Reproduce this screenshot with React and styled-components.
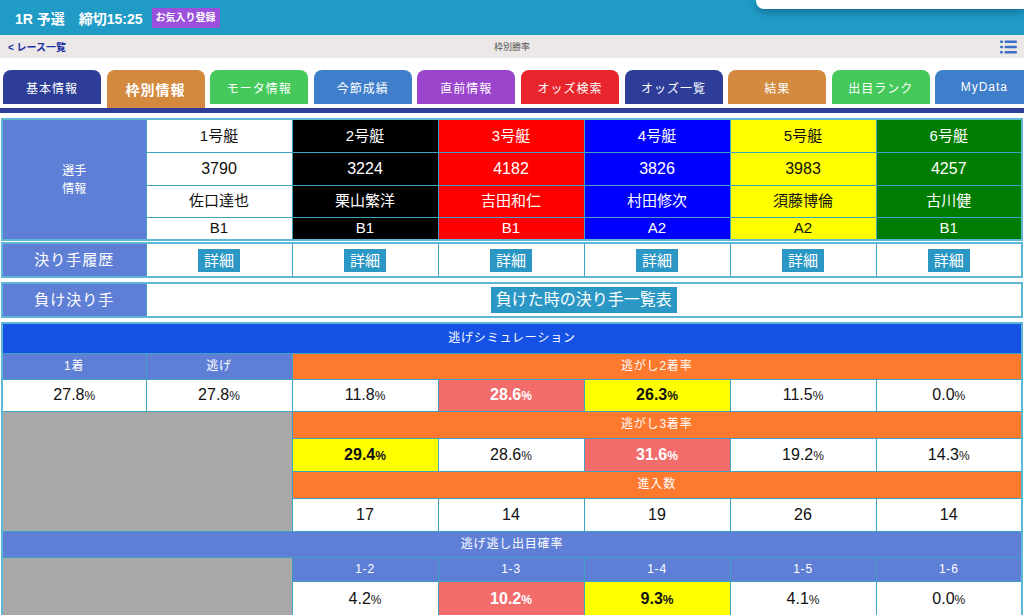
import React from 'react';
import styled, { createGlobalStyle } from 'styled-components';

const GlobalStyle = createGlobalStyle`
  html, body {
    margin: 0;
    padding: 0;
    background: #ffffff;
    font-family: "Liberation Sans", "Noto Sans CJK JP", sans-serif;
  }
  #root {
    width: 1024px;
    height: 615px;
    overflow: hidden;
  }
`;

const Page = styled.div`
  width: 1024px;
  height: 615px;
  overflow: hidden;
  position: relative;
`;

const Header = styled.header`
  height: 35px;
  background: #1f9bc6;
  display: flex;
  align-items: center;
  padding-left: 15px;
  gap: 9px;
  position: relative;
`;

const Title = styled.h1`
  margin: 0;
  color: #ffffff;
  font-size: 14px;
  font-weight: bold;
  white-space: pre;
`;

const Badge = styled.span`
  background: #9a50da;
  color: #ffffff;
  font-size: 10px;
  font-weight: bold;
  padding: 4px 4px;
  line-height: 12px;
`;

const FloatPanel = styled.div`
  position: absolute;
  top: 0;
  right: 0;
  width: 268px;
  height: 9px;
  background: #ffffff;
  border-bottom-left-radius: 8px;
  box-shadow: 0 3px 7px rgba(0, 40, 70, 0.4);
`;

const NavBar = styled.nav`
  height: 23px;
  background: #ebe8e7;
  display: grid;
  grid-template-columns: 1fr auto 1fr;
  align-items: center;
  padding: 0 8px;
`;

const BackLink = styled.a`
  color: #1c2fa3;
  font-size: 10px;
  font-weight: bold;
`;

const NavTitle = styled.span`
  color: #555555;
  font-size: 9px;
`;

const MenuIcon = styled.svg`
  justify-self: end;
  margin-right: -1px;
`;

const TabStrip = styled.div`
  display: flex;
  align-items: flex-start;
  gap: 5.6px;
  padding: 12px 0 0 3px;
  height: 38px;
  overflow: hidden;
`;

const Tab = styled.div`
  flex: 0 0 98px;
  height: ${p => (p.$active ? '38px' : '34px')};
  background: ${p => p.$color};
  border-radius: 8px 8px 0 0;
  color: #ffffff;
  display: flex;
  align-items: center;
  justify-content: center;
  font-size: ${p => (p.$active ? '14px' : '12px')};
  font-weight: ${p => (p.$active ? 'bold' : 'normal')};
  letter-spacing: 1px;
`;

const TabLine = styled.div`
  height: 5px;
  background: #2d3d98;
  margin-bottom: 5px;
`;

const Grid = styled.table`
  width: 1022px;
  margin: ${p => p.$mt || 0}px 0 0 1px;
  border-collapse: collapse;
  table-layout: fixed;
  border: 2px solid #5db8d6;
`;

const Row = styled.tr`
  height: ${p => p.$h}px;
`;

const tones = {
  white: ['#ffffff', '#111111'],
  black: ['#000000', '#ffffff'],
  red: ['#ff0000', '#ffffff'],
  blue: ['#0000ff', '#ffffff'],
  yellow: ['#ffff00', '#111111'],
  green: ['#007c00', '#ffffff'],
  label: ['#5f7fd6', '#ffffff'],
  head: ['#1651e6', '#ffffff'],
  orange: ['#fd792e', '#ffffff'],
  gray: ['#a8a8a8', '#ffffff'],
  pink: ['#f26c6c', '#ffffff'],
};

const Cell = styled.td`
  padding: 0;
  text-align: center;
  vertical-align: middle;
  border: 1px solid #3fa2c3;
  background: ${p => tones[p.$tone || 'white'][0]};
  color: ${p => tones[p.$tone || 'white'][1]};
  font-size: ${p => p.$size || 15}px;
  font-weight: ${p => (p.$bold ? 'bold' : 'normal')};
  letter-spacing: ${p => p.$ls || 0}px;
  line-height: ${p => p.$lh || 1.2};
  white-space: pre-line;
`;

const DetailButton = styled.span`
  display: inline-block;
  background: #2a97c5;
  color: #ffffff;
  font-size: 15px;
  padding: 2px 6px;
  line-height: 19px;
`;

const WideButton = styled(DetailButton)`
  font-size: 16px;
  padding: 3px 5px;
  line-height: 20px;
`;

const Pct = styled.span`
  font-size: 12px;
`;

const tabs = [
  ['基本情報', '#2d3d98'],
  ['枠別情報', '#d38a3f', true],
  ['モータ情報', '#45c95b'],
  ['今節成績', '#3f7ecb'],
  ['直前情報', '#9b45cc'],
  ['オッズ検索', '#e8252c'],
  ['オッズ一覧', '#2d3d98'],
  ['結果', '#d38a3f'],
  ['出目ランク', '#45c95b'],
  ['MyData', '#3f7ecb'],
];

const boats = [
  { tone: 'white', no: '1号艇', id: '3790', name: '佐口達也', cls: 'B1' },
  { tone: 'black', no: '2号艇', id: '3224', name: '栗山繁洋', cls: 'B1' },
  { tone: 'red', no: '3号艇', id: '4182', name: '吉田和仁', cls: 'B1' },
  { tone: 'blue', no: '4号艇', id: '3826', name: '村田修次', cls: 'A2' },
  { tone: 'yellow', no: '5号艇', id: '3983', name: '須藤博倫', cls: 'A2' },
  { tone: 'green', no: '6号艇', id: '4257', name: '古川健', cls: 'B1' },
];

const Cols = () => (
  <colgroup>
    <col style={{ width: 144 }} />
    {boats.map(b => (
      <col key={b.no} />
    ))}
  </colgroup>
);

// sub headings inside the simulation table
const Head = ({ tone = 'label', span, children }) => (
  <Cell $tone={tone} $size={12} $ls={0.8} colSpan={span}>
    {children}
  </Cell>
);

const Percent = ({ v, tone, bold }) => (
  <Cell $tone={tone} $size={16} $bold={bold}>
    {v}
    <Pct>%</Pct>
  </Cell>
);

const second = [
  { v: '11.8' },
  { v: '28.6', tone: 'pink', bold: true },
  { v: '26.3', tone: 'yellow', bold: true },
  { v: '11.5' },
  { v: '0.0' },
];
const third = [
  { v: '29.4', tone: 'yellow', bold: true },
  { v: '28.6' },
  { v: '31.6', tone: 'pink', bold: true },
  { v: '19.2' },
  { v: '14.3' },
];
const entries = ['17', '14', '19', '26', '14'];
const combos = [
  { k: '1-2', v: '4.2' },
  { k: '1-3', v: '10.2', tone: 'pink', bold: true },
  { k: '1-4', v: '9.3', tone: 'yellow', bold: true },
  { k: '1-5', v: '4.1' },
  { k: '1-6', v: '0.0' },
];

export default function App() {
  return (
    <Page>
      <GlobalStyle />
      <Header>
        <Title>{'1R 予選　締切15:25'}</Title>
        <Badge>お気入り登録</Badge>
        <FloatPanel />
      </Header>
      <NavBar>
        <BackLink>&lt; レース一覧</BackLink>
        <NavTitle>枠別勝率</NavTitle>
        <MenuIcon width="17" height="14" viewBox="0 0 17 14">
          <g fill="#3d6fc5">
            <rect x="0" y="0.5" width="3" height="2.6" rx="1" />
            <rect x="4.5" y="0.5" width="12.5" height="2.6" rx="1" />
            <rect x="0" y="5.7" width="3" height="2.6" rx="1" />
            <rect x="4.5" y="5.7" width="12.5" height="2.6" rx="1" />
            <rect x="0" y="10.9" width="3" height="2.6" rx="1" />
            <rect x="4.5" y="10.9" width="12.5" height="2.6" rx="1" />
          </g>
        </MenuIcon>
      </NavBar>

      <TabStrip>
        {tabs.map(([label, color, active]) => (
          <Tab key={label} $color={color} $active={active}>
            {label}
          </Tab>
        ))}
      </TabStrip>
      <TabLine />

      <Grid>
        <Cols />
        <tbody>
          <Row $h={33}>
            <Cell $tone="label" $size={12} $lh={1.5} rowSpan={4}>
              {'選手\n情報'}
            </Cell>
            {boats.map(b => (
              <Cell key={b.no} $tone={b.tone}>{b.no}</Cell>
            ))}
          </Row>
          <Row $h={33}>
            {boats.map(b => (
              <Cell key={b.no} $tone={b.tone} $size={16}>{b.id}</Cell>
            ))}
          </Row>
          <Row $h={32}>
            {boats.map(b => (
              <Cell key={b.no} $tone={b.tone}>{b.name}</Cell>
            ))}
          </Row>
          <Row $h={23}>
            {boats.map(b => (
              <Cell key={b.no} $tone={b.tone}>{b.cls}</Cell>
            ))}
          </Row>
        </tbody>
      </Grid>

      <Grid $mt={1}>
        <Cols />
        <tbody>
          <Row $h={34}>
            <Cell $tone="label" $size={15} $ls={1}>決り手履歴</Cell>
            {boats.map(b => (
              <Cell key={b.no}>
                <DetailButton>詳細</DetailButton>
              </Cell>
            ))}
          </Row>
        </tbody>
      </Grid>

      <Grid $mt={4}>
        <Cols />
        <tbody>
          <Row $h={34}>
            <Cell $tone="label" $size={15} $ls={1}>負け決り手</Cell>
            <Cell colSpan={6}>
              <WideButton>負けた時の決り手一覧表</WideButton>
            </Cell>
          </Row>
        </tbody>
      </Grid>

      <Grid $mt={4}>
        <Cols />
        <tbody>
          <Row $h={30}>
            <Head tone="head" span={7}>逃げシミュレーション</Head>
          </Row>
          <Row $h={26}>
            <Head>1着</Head>
            <Head>逃げ</Head>
            <Head tone="orange" span={5}>逃がし2着率</Head>
          </Row>
          <Row $h={32}>
            <Percent v="27.8" />
            <Percent v="27.8" />
            {second.map((s, i) => (
              <Percent key={i} {...s} />
            ))}
          </Row>
          <Row $h={27}>
            <Cell $tone="gray" colSpan={2} rowSpan={4} />
            <Head tone="orange" span={5}>逃がし3着率</Head>
          </Row>
          <Row $h={33}>
            {third.map((s, i) => (
              <Percent key={i} {...s} />
            ))}
          </Row>
          <Row $h={27}>
            <Head tone="orange" span={5}>進入数</Head>
          </Row>
          <Row $h={33}>
            {entries.map((n, i) => (
              <Cell key={i} $size={16}>{n}</Cell>
            ))}
          </Row>
          <Row $h={26}>
            <Head span={7}>逃げ逃し出目確率</Head>
          </Row>
          <Row $h={24}>
            <Cell $tone="gray" colSpan={2} rowSpan={2} />
            {combos.map(c => (
              <Head key={c.k}>{c.k}</Head>
            ))}
          </Row>
          <Row $h={36}>
            {combos.map(c => (
              <Percent key={c.k} {...c} />
            ))}
          </Row>
        </tbody>
      </Grid>
    </Page>
  );
}
